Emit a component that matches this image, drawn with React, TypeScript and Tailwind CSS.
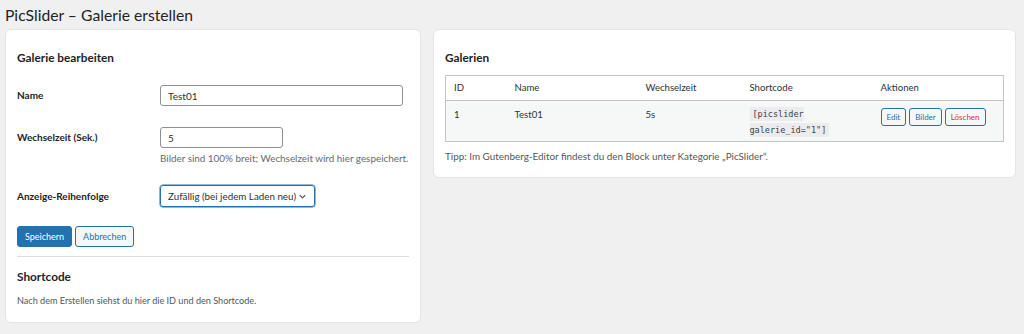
export default function App() {
  return (
    <div
      className="min-h-[334px] w-[1024px] bg-[#f0f0f1] text-[#1d2327] px-[5px]"
      style={{ fontFamily: 'Lato, "Noto Sans", sans-serif' }}
    >
      <h1 className="pt-[3px] h-[29px] text-[15.7px] leading-[24px] font-normal text-[#1d2327]">
        PicSlider – Galerie erstellen
      </h1>

      <div className="grid grid-cols-[416px_583px] gap-[12px] items-start">
        {/* Left: edit form */}
        <section className="bg-white rounded-[6px] border border-[#e2e4e7] px-[11px] pt-[18px] pb-[14px]">
          <h2 className="text-[11.8px] font-bold leading-[20px]">Galerie bearbeiten</h2>

          <div className="mt-[17px] flex items-center h-[21px]">
            <label className="w-[143px] shrink-0 text-[10px] font-bold">Name</label>
            <input
              defaultValue="Test01"
              className="block h-[21px] w-[243px] rounded-[3px] border border-[#8c8f94] px-[7px] text-[10px] text-[#2c3338] outline-none"
            />
          </div>

          <div className="mt-[21px] flex items-start">
            <label className="w-[143px] shrink-0 text-[10px] font-bold leading-[21px]">Wechselzeit (Sek.)</label>
            <div>
              <input
                defaultValue="5"
                className="block h-[21px] w-[123px] rounded-[3px] border border-[#8c8f94] px-[7px] text-[10px] text-[#2c3338] outline-none"
              />
              <p className="mt-[3px] text-[9.9px] leading-[14px] text-[#646970] whitespace-nowrap">
                Bilder sind 100% breit; Wechselzeit wird hier gespeichert.
              </p>
            </div>
          </div>

          <div className="mt-[20px] flex items-center">
            <label className="w-[143px] shrink-0 text-[10px] font-bold">Anzeige-Reihenfolge</label>
            <div className="h-[22px] w-[155px] rounded-[3px] border border-[#2271b1] shadow-[0_0_0_0.5px_#2271b1] flex items-center justify-between pl-[7px] pr-[7px] text-[9.8px] text-[#2c3338] whitespace-nowrap">
              <span>Zufällig (bei jedem Laden neu)</span>
              <svg width="9" height="9" viewBox="0 0 10 10" fill="none" className="shrink-0">
                <path d="M2 3.5 L5 6.5 L8 3.5" stroke="#50575e" strokeWidth="1.4" />
              </svg>
            </div>
          </div>

          <div className="mt-[19px] flex gap-[3px]">
            <button className="h-[21px] px-[7px] rounded-[3px] bg-[#2271b1] border border-[#2271b1] text-white text-[9px]">
              Speichern
            </button>
            <button className="h-[21px] px-[7px] rounded-[3px] bg-[#f6f7f7] border border-[#2271b1] text-[#2271b1] text-[9px]">
              Abbrechen
            </button>
          </div>

          <hr className="mt-[9px] border-0 border-t border-[#dcdcde]" />

          <h2 className="mt-[10px] text-[11.8px] font-bold leading-[20px]">Shortcode</h2>
          <p className="mt-[7px] text-[9.1px] leading-[14px] text-[#50575e]">
            Nach dem Erstellen siehst du hier die ID und den Shortcode.
          </p>
        </section>

        {/* Right: gallery list */}
        <section className="bg-white rounded-[6px] border border-[#e2e4e7] px-[11px] pt-[18px] pb-[14px]">
          <h2 className="text-[11.8px] font-bold leading-[20px]">Galerien</h2>

          <table className="mt-[7px] w-full table-fixed border border-[#c3c4c7] border-collapse text-[9.6px] text-[#2c3338]">
            <thead>
              <tr className="h-[25px] border-b border-[#c3c4c7] text-left">
                <th className="w-[61px] pl-[8px] font-normal">ID</th>
                <th className="w-[131px] pl-[8px] font-normal">Name</th>
                <th className="w-[104px] pl-[8px] font-normal">Wechselzeit</th>
                <th className="w-[131px] pl-[8px] font-normal">Shortcode</th>
                <th className="pl-[8px] font-normal">Aktionen</th>
              </tr>
            </thead>
            <tbody>
              <tr className="h-[40px] bg-[#f6f7f7] align-top">
                <td className="pl-[8px] pt-[7px]">1</td>
                <td className="pl-[8px] pt-[7px]">Test01</td>
                <td className="pl-[8px] pt-[7px]">5s</td>
                <td className="pl-[8px] pt-[5px] pb-[3px] leading-[16px]">
                  <code
                    className="bg-[#ececee] px-[3px] py-[2px] text-[8.5px] text-[#3c434a]"
                    style={{ fontFamily: '"DejaVu Sans Mono", "Liberation Mono", monospace' }}
                  >
                    [picslider galerie_id="1"]
                  </code>
                </td>
                <td className="pl-[8px] pt-[7px]">
                  <div className="flex gap-[3px]">
                    <button className="h-[18px] px-[5px] rounded-[3px] border border-[#2271b1] bg-[#f6f7f7] text-[#2271b1] text-[8px]">
                      Edit
                    </button>
                    <button className="h-[18px] px-[5px] rounded-[3px] border border-[#2271b1] bg-[#f6f7f7] text-[#2271b1] text-[8px]">
                      Bilder
                    </button>
                    <button className="h-[18px] px-[5px] rounded-[3px] border border-[#2271b1] bg-[#f6f7f7] text-[#d63638] text-[8px]">
                      Löschen
                    </button>
                  </div>
                </td>
              </tr>
            </tbody>
          </table>

          <p className="mt-[7px] text-[9.9px] leading-[14px] text-[#50575e]">
            Tipp: Im Gutenberg-Editor findest du den Block unter Kategorie „PicSlider“.
          </p>
        </section>
      </div>
    </div>
  );
}
